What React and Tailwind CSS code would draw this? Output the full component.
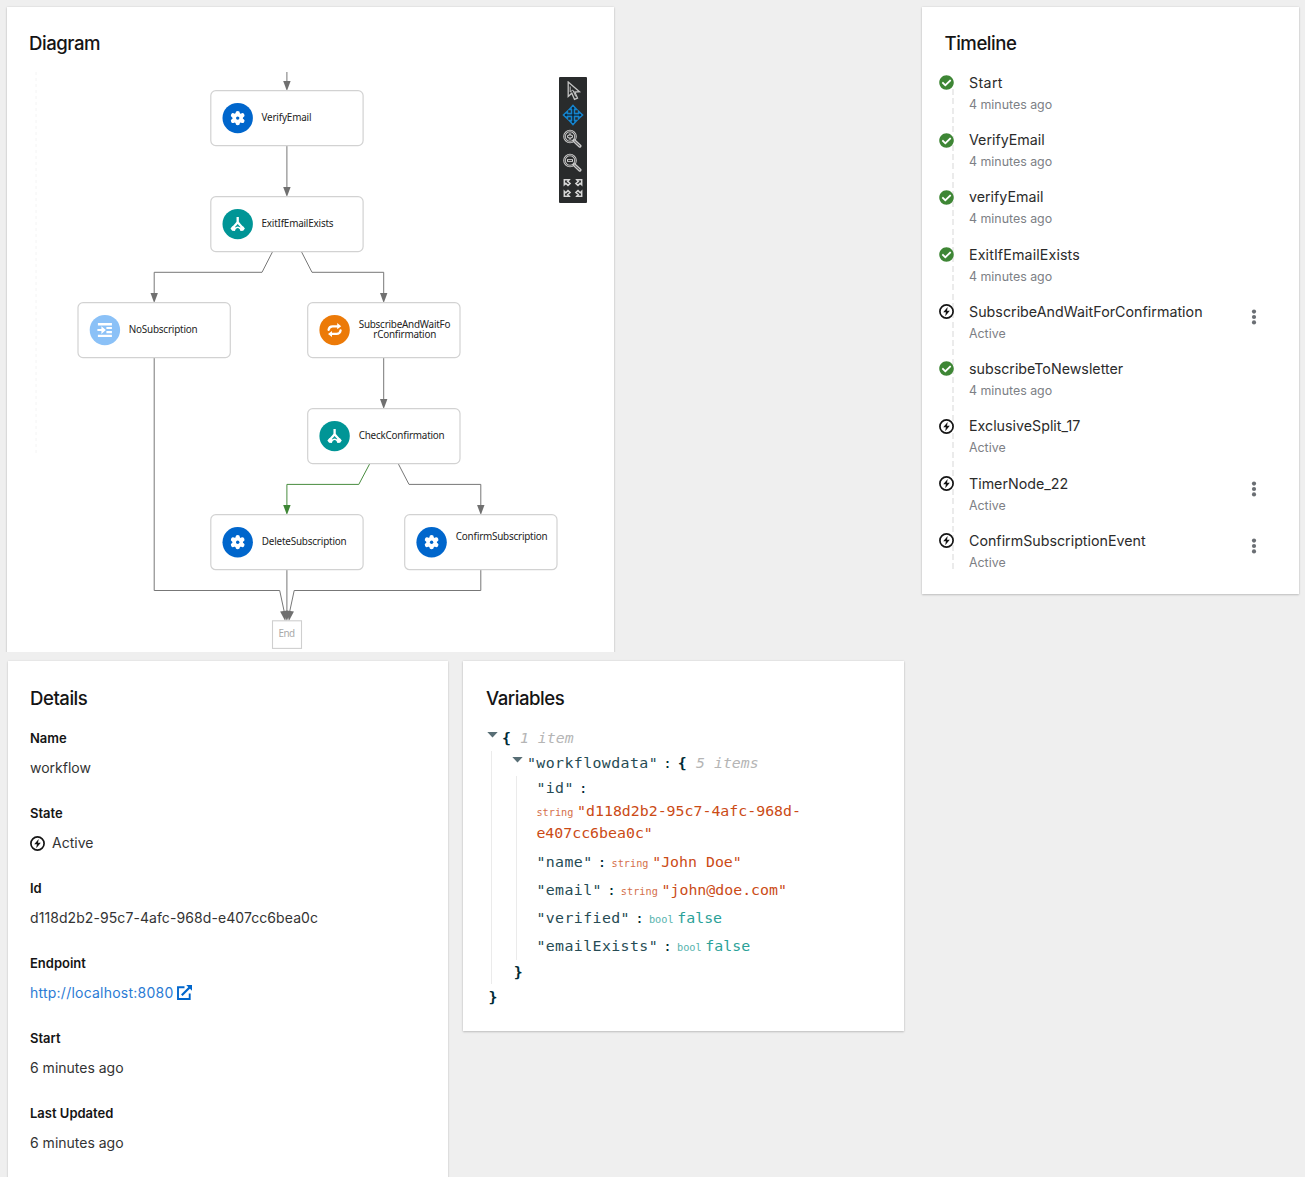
import React from "react";

const steps = [
  { name: "Start", done: true, track: "tracking-[0.35px]" },
  { name: "VerifyEmail", done: true },
  { name: "verifyEmail", done: true },
  { name: "ExitIfEmailExists", done: true, track: "tracking-[0.12px]" },
  { name: "SubscribeAndWaitForConfirmation", menu: true, track: "tracking-[0.02px]" },
  { name: "subscribeToNewsletter", done: true },
  { name: "ExclusiveSplit_17" },
  { name: "TimerNode_22", menu: true },
  { name: "ConfirmSubscriptionEvent", menu: true },
];

function CheckIcon() {
  return (
    <svg className="size-[15px] shrink-0" viewBox="0 0 512 512" fill="#3e8635">
      <path d="M504 256c0 137-111 248-248 248S8 393 8 256 119 8 256 8s248 111 248 248zM227.300 387.300l184-184c6.200-6.200 6.200-16.400 0-22.600l-22.600-22.600c-6.200-6.200-16.400-6.200-22.600 0L216 308.100l-70.100-70.100c-6.200-6.200-16.400-6.200-22.600 0l-22.600 22.600c-6.200 6.200-6.200 16.400 0 22.600l104 104c6.200 6.300 16.400 6.300 22.600.1z" />
    </svg>
  );
}

function BoltIcon() {
  return (
    <svg className="size-[15px] shrink-0" viewBox="0 0 15 15">
      <circle cx="7.500" cy="7.500" r="6.600" fill="white" stroke="#151515" strokeWidth="1.700" />
      <path d="M8.700 2.900 4.200 8.200h2.700l-.7 4 4.600-5.500H8z" fill="#151515" />
    </svg>
  );
}

function Kebab() {
  return (
    <svg className="h-4 w-1.5" viewBox="0 0 6 16" fill="#6a6e73">
      <circle cx="3" cy="2.600" r="2.100" />
      <circle cx="3" cy="8" r="2.100" />
      <circle cx="3" cy="13.400" r="2.100" />
    </svg>
  );
}

function Title({ children }) {
  return (
    <h2 className="h-6 text-[18.600px] leading-6 font-[450] tracking-[-0.480px] text-[#151515]">{children}</h2>
  );
}

/* ---------- Diagram ---------- */

function Gear() {
  return (
    <g>
      <g stroke="white" strokeWidth="4.400" strokeLinecap="round">
        <path d="M0-4.900V4.900M-4.600-2.700 4.600 2.700M-4.600 2.700 4.600-2.700" />
      </g>
      <circle r="5.300" fill="white" />
      <circle r="1.700" fill="#0066cc" />
    </g>
  );
}

function Branch() {
  return (
    <g fill="none" stroke="white" strokeWidth="2.300">
      <path d="M0-7V-1.500M0-2.500C0 0-4 .5-4.200 4M0-2.500C0 0 4 .5 4.200 4" />
      <path d="M-7.200 4.300-5.200 1.800-1.500 4-2.800 6.800-5.500 6.600zM7.200 4.300 5.200 1.800 1.500 4 2.800 6.800 5.500 6.600z" fill="white" stroke="none" />
      <path d="M-2.400 4.400C-1 2.600 1 2.600 2.400 4.400" strokeWidth="1.500" />
    </g>
  );
}

function Indent() {
  return (
    <g fill="white">
      <path d="M-7-7H7v2.300H-7zM-7 4.700H7V7H-7zM1.500-3.200H7v2.200H1.500zM1.500 1H7v2.200H1.500z" />
      <path d="M-7.500-1h4v-2.800L1 0-3.500 3.800V1h-4z" />
    </g>
  );
}

function Loop() {
  return (
    <g fill="none" stroke="white" strokeWidth="2.300" strokeLinecap="round">
      <path d="M-6-.3C-5.600-2.800-4-3.800-2-3.800H3M6 .3C5.600 2.800 4 3.800 2 3.800H-3" />
      <path d="M2.600-7 6.600-3.800 2.600-.9zM-2.600 7-6.600 3.800-2.600.9z" fill="white" stroke="none" />
    </g>
  );
}

const kinds = {
  gear: { color: "#0066cc", Icon: Gear },
  branch: { color: "#009596", Icon: Branch },
  indent: { color: "#8bc1f7", Icon: Indent },
  loop: { color: "#ec7a08", Icon: Loop },
};

const nodes = [
  { x: 210.8, y: 90.6, kind: "gear", lines: [["VerifyEmail", 261.5, 121, 50]] },
  { x: 210.8, y: 196.600, kind: "branch", lines: [["ExitIfEmailExists", 261.5, 227, 72]] },
  { x: 78, y: 302.600, kind: "indent", lines: [["NoSubscription", 128.700, 333, 69]] },
  {
    x: 307.700, y: 302.600, kind: "loop",
    lines: [["SubscribeAndWaitFo", 358.700, 328, 91.800], ["rConfirmation", 373.300, 338, 63]],
  },
  { x: 307.700, y: 408.600, kind: "branch", lines: [["CheckConfirmation", 358.700, 439, 86]] },
  { x: 210.8, y: 514.700, kind: "gear", lines: [["DeleteSubscription", 261.700, 545, 85]] },
  { x: 404.700, y: 514.700, kind: "gear", lines: [["ConfirmSubscription", 455.700, 540, 92]] },
];

const edges = [
  "M286.900 72V82",
  "M286.900 146V190",
  "M272.500 251.800 262 272.300H154.200V294",
  "M301.500 251.800 312 272.300H383.700V294",
  "M383.700 358V400",
  "M398.300 463.800 409 484.400H480.800V506",
  "M154.200 358V590.500H279.700L284.300 612",
  "M286.900 570V612",
  "M480.800 570V590.500H294.200L289.600 612",
];

const heads = [
  [286.900, 91, 0],
  [286.900, 197, 0],
  [154.200, 303, 0],
  [383.700, 303, 0],
  [383.700, 409, 0],
  [480.800, 515, 0],
  [285.200, 621, -8],
  [286.900, 621, 0],
  [288.900, 621, 8],
];

function Flow() {
  return (
    <svg className="block h-[580px] w-[607px]" viewBox="7 72 607 580">
      <path d="M36 72V455" stroke="#f4f4f4" strokeDasharray="3 3" />
      <g fill="none" stroke="#707070" strokeWidth="0.95">
        {edges.map((d) => (
          <path key={d} d={d} />
        ))}
        <path d="M369.700 463.800 358.800 484.400H286.900V506" stroke="#3e8635" />
      </g>
      {heads.map(([x, y, r], i) => (
        <path key={i} d="M-3.700-10H3.700L0 0z" fill="#707070" transform={`translate(${x} ${y}) rotate(${r})`} />
      ))}
      <path d="M-3.700-10H3.700L0 0z" fill="#3e8635" transform="translate(286.900 515)" />
      {nodes.map(({ x, y, kind, lines }) => {
        const { color, Icon } = kinds[kind];
        return (
          <g key={lines[0][0]}>
            <rect x={x} y={y} width="152.300" height="55" rx="5" fill="white" stroke="#d2d2d2" strokeWidth="1.200" />
            <g transform={`translate(${x + 26.900} ${y + 27.500})`}>
              <circle r="15.200" fill={color} />
              <Icon />
            </g>
            {lines.map(([text, tx, ty, w]) => (
              <text
                key={text}
                x={tx}
                y={ty}
                textLength={w}
                className="fill-[#222] font-['Noto_Sans',sans-serif] text-[9.900px]"
              >
                {text}
              </text>
            ))}
          </g>
        );
      })}
      <rect x="272.500" y="620.800" width="29" height="27.600" fill="white" stroke="#cfcfcf" strokeWidth="1.100" />
      <text x="278.500" y="637" textLength="16.600" className="fill-[#a8a8a8] font-['Noto_Sans',sans-serif] text-[9.900px]">
        End
      </text>
    </svg>
  );
}

function Magnifier({ plus }) {
  return (
    <svg className="size-5" viewBox="0 0 20 20" fill="none">
      <circle cx="8" cy="7.500" r="5.500" stroke="#c9c9c9" strokeWidth="2.600" />
      <circle cx="8" cy="7.500" r="5.500" stroke="#333" strokeWidth="0.700" />
      <path d="m12.200 11.800 5.600 5.200" stroke="#c9c9c9" strokeWidth="3.400" strokeLinecap="round" />
      <path d="m12.700 12.300 4.900 4.500" stroke="#333" strokeWidth="0.900" strokeLinecap="round" />
      <path d={plus ? "M8 4.600v5.800M5.100 7.500h5.800" : "M5 7.500h6"} stroke="#d8d8d8" strokeWidth="2.600" />
      <path d={plus ? "M8 5.500v4M6 7.500h4" : "M6 7.500h4"} stroke="#292929" strokeWidth="0.900" />
    </svg>
  );
}

function Toolbar() {
  return (
    <div className="absolute top-[70px] left-[552px] flex h-[125.500px] w-7 flex-col items-center rounded-[1px] bg-[#292b2c] pt-1 pr-[2px]">
      <svg className="ml-px size-5" viewBox="0 0 20 20" fill="none" stroke="#c4c4c4" strokeWidth="1.300">
        <path d="M5.200 1v14.500l3.600-3.300 2.700 6.200 3-1.300-2.700-6 4.700-.4z" />
        <path d="M7.200 5.500v5.500l2.600-2 3 6.500" strokeWidth="1" />
      </svg>
      <svg className="mt-[3px] ml-px size-[22px]" viewBox="0 0 22 22">
        <path
          d="m11 1.500 3.600 3.900h-2.200v4.200h4.200V7.400l3.900 3.600-3.900 3.600v-2.200h-4.200v4.200h2.200L11 20.500l-3.600-3.900h2.200v-4.200H5.400v2.200L1.500 11l3.900-3.600v2.200h4.200V5.400H7.400z"
          fill="#0c1218"
          stroke="#1583cc"
          strokeWidth="1.600"
        />
      </svg>
      <div className="mt-[3px] flex flex-col gap-1">
        <Magnifier plus />
        <Magnifier />
      </div>
      <svg className="mt-[4px] ml-px size-[22px]" viewBox="-11 -11 22 22" fill="none" stroke="#d6d6d6" strokeWidth="1.500">
        {[[1, 1], [-1, 1], [1, -1], [-1, -1]].map(([sx, sy]) => (
          <path key={`${sx}${sy}`} transform={`scale(${sx} ${sy})`} d="M8.700-8.300H3.800l1.500 1.800L2.900-4.500 5-2.600l2.200-2.200L8.700-3.300z" />
        ))}
      </svg>
    </div>
  );
}

/* ---------- Details ---------- */

function Field({ label, children }) {
  return (
    <div className="h-[75px]">
      <dt className="text-[13px] leading-5 font-semibold text-[#151515]">{label}</dt>
      <dd className="mt-2 flex h-6 items-center text-[14px] leading-6 text-[#333]">{children}</dd>
    </div>
  );
}

/* ---------- Variables ---------- */

function Caret() {
  return (
    <svg className="-mt-[7px] h-[6px] w-[11px] shrink-0" viewBox="0 0 11 6">
      <path d="M.3 0h10.400L5.500 5.600z" fill="#586e75" />
    </svg>
  );
}

function Key({ children }) {
  return <span className="tracking-[0.4px] text-[#264b54]">"{children}"</span>;
}

function Colon() {
  return <span className="mx-[5px] text-[#002b36]">:</span>;
}

function Type({ children }) {
  return <span className="mr-[3.700px] text-[10.240px] leading-none opacity-80">{children}</span>;
}

function Row({ name, type, value, color }) {
  return (
    <div className="h-[28.150px] py-[2.900px]">
      <Key>{name}</Key>
      <Colon />
      <span className={color}>
        <Type>{type}</Type>
        {value}
      </span>
    </div>
  );
}

function JsonTree() {
  return (
    <div className="font-['DejaVu_Sans_Mono',monospace] text-[14.880px] leading-[22.300px] whitespace-pre">
      <div className="flex h-[25px] items-center pl-[0.700px]">
        <Caret />
        <span className="ml-[4.300px] font-bold text-[#002b36]">{"{"}</span>
        <span className="ml-[9px] text-[#b5b5b5] italic">1 item</span>
      </div>
      <div className="ml-[4.500px] border-l border-[#ebebeb]">
        <div className="flex h-[25px] items-center pl-[20px]">
          <Caret />
          <span className="ml-[4.500px]">
            <Key>workflowdata</Key>
          </span>
          <Colon />
          <span className="ml-[0.800px] font-bold text-[#002b36]">{"{"}</span>
          <span className="ml-[9.300px] text-[#b5b5b5] italic">5 items</span>
        </div>
        <div className="ml-[24.500px] border-l border-[#ebebeb] pl-[19.400px]">
          <div className="h-[72.300px] pt-[1.900px]">
            <Key>id</Key>
            <Colon />
            <div className="text-[#cb4b16]">
              <Type>string</Type>
              {'"d118d2b2-95c7-4afc-968d-\ne407cc6bea0c"'}
            </div>
          </div>
          <Row name="name" type="string" value={'"John Doe"'} color="text-[#cb4b16]" />
          <Row name="email" type="string" value={'"john@doe.com"'} color="text-[#cb4b16]" />
          <Row name="verified" type="bool" value="false" color="text-[#2aa198]" />
          <Row name="emailExists" type="bool" value="false" color="text-[#2aa198]" />
        </div>
        <div className="flex h-[24px] items-center pl-[22.300px] font-bold text-[#002b36]">{"}"}</div>
      </div>
      <div className="flex h-[25.300px] items-center pl-[2.500px] font-bold text-[#002b36]">{"}"}</div>
    </div>
  );
}

export default function App() {
  return (
    <div className="flex h-[1177px] w-[1305px] overflow-hidden bg-[#efefef] pt-[7px] pl-[7px] font-['Inter',sans-serif]">
      <div className="flex w-[897px] shrink-0 flex-col">
        <div className="-mt-[7px] -ml-[7px] h-[652px] w-[640px] shrink-0 overflow-hidden pt-[7px] pl-[7px]">
          <section className="relative h-[660px] w-[607px] bg-white shadow-[0_1px_2px_rgba(3,3,3,0.18),0_0_2px_rgba(3,3,3,0.1)]">
            <div className="h-[65px] pt-6 pl-[22px]">
              <Title>Diagram</Title>
            </div>
            <Flow />
            <Toolbar />
          </section>
        </div>
        <div className="mt-[9px] ml-[1px] flex items-start gap-[15px]">
          <section className="h-[530px] w-[440px] bg-white px-[22px] pt-[25px] shadow-[0_1px_2px_rgba(3,3,3,0.14),0_0_2px_rgba(3,3,3,0.08)]">
            <Title>Details</Title>
            <dl className="mt-[18px]">
              <Field label="Name">workflow</Field>
              <Field label="State">
                <BoltIcon />
                <span className="ml-[7px]">Active</span>
              </Field>
              <Field label="Id">
                <span className="tracking-[0.080px]">d118d2b2-95c7-4afc-968d-e407cc6bea0c</span>
              </Field>
              <Field label="Endpoint">
                <a className="flex items-center tracking-[0.230px] text-[#2b7bd4]">
                  http://localhost:8080
                  <svg className="-mt-px ml-[4px] size-[15px]" viewBox="0 0 15 15" fill="none" stroke="#0066cc" strokeWidth="1.900">
                    <path d="M7.500 2.300H1v11.700h11.700V8.500" />
                    <path d="M4.800 10.300 12.500 2.500" strokeWidth="2.200" />
                    <path d="M9.200 0H15v5.800z" fill="#0066cc" stroke="none" />
                  </svg>
                </a>
              </Field>
              <Field label="Start">6 minutes ago</Field>
              <Field label="Last Updated">6 minutes ago</Field>
            </dl>
          </section>
          <section className="h-[369.500px] w-[441px] bg-white pt-[25px] pl-[23px] shadow-[0_1px_2px_rgba(3,3,3,0.18),0_0_2px_rgba(3,3,3,0.1)]">
            <Title>Variables</Title>
            <div className="mt-[15.500px]">
              <JsonTree />
            </div>
          </section>
        </div>
      </div>

      <section className="ml-[18.400px] h-[587.400px] w-[377px] shrink-0 bg-white pt-6 pl-[22.100px] shadow-[0_1px_2px_rgba(3,3,3,0.18),0_0_2px_rgba(3,3,3,0.1)]">
        <Title>Timeline</Title>
        <ol className="relative mt-[16px] -ml-[5.500px]">
          <div className="absolute top-[18px] left-[13px] h-[483px] w-[2px] bg-[repeating-linear-gradient(to_bottom,#ebebeb_0_6px,transparent_6px_9.300px)]" />
          {steps.map(({ name, done, menu, track }) => (
            <li key={name} className="relative flex h-[57.220px]">
              <div className="mt-[4.300px]">{done ? <CheckIcon /> : <BoltIcon />}</div>
              <div className="ml-[15px] w-[282px]">
                <div className={`text-[14.250px] leading-6 text-[#2b2b2b] ${track ?? ""}`}>{name}</div>
                <div className="text-[12.400px] leading-5 text-[#7d8085]">{done ? "4 minutes ago" : "Active"}</div>
              </div>
              {menu && (
                <button className="mt-[9px] h-4">
                  <Kebab />
                </button>
              )}
            </li>
          ))}
        </ol>
      </section>
    </div>
  );
}
